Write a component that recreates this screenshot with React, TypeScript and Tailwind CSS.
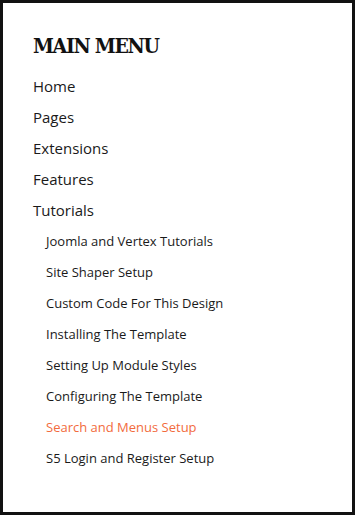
import React from "react";

const top = ["Home", "Pages", "Extensions", "Features", "Tutorials"];
const sub = [
  "Joomla and Vertex Tutorials",
  "Site Shaper Setup",
  "Custom Code For This Design",
  "Installing The Template",
  "Setting Up Module Styles",
  "Configuring The Template",
  "Search and Menus Setup",
  "S5 Login and Register Setup",
];

export default function App() {
  return (
    <div className="w-[355px] h-[515px] bg-white border-[3px] border-[#111111] box-border pl-[30px] pt-[29px]">
      <h2
        className="text-[21px] leading-[28px] font-bold text-[#111] tracking-[-1.3px]"
        style={{ fontFamily: '"DejaVu Serif Condensed", "DejaVu Serif", serif' }}
      >
        MAIN MENU
      </h2>
      <ul
        className="mt-[11px] text-[#1a1a1a]"
        style={{ fontFamily: '"Open Sans", sans-serif' }}
      >
        {top.map((t) => (
          <li key={t} className="text-[15px] leading-[31px]">
            {t}
          </li>
        ))}
        <li>
          <ul className="pl-[13px]">
            {sub.map((s) => (
              <li
                key={s}
                className={
                  "text-[13px] leading-[31px] " +
                  (s === "Search and Menus Setup" ? "text-[#f26b3d]" : "")
                }
              >
                {s}
              </li>
            ))}
          </ul>
        </li>
      </ul>
    </div>
  );
}
